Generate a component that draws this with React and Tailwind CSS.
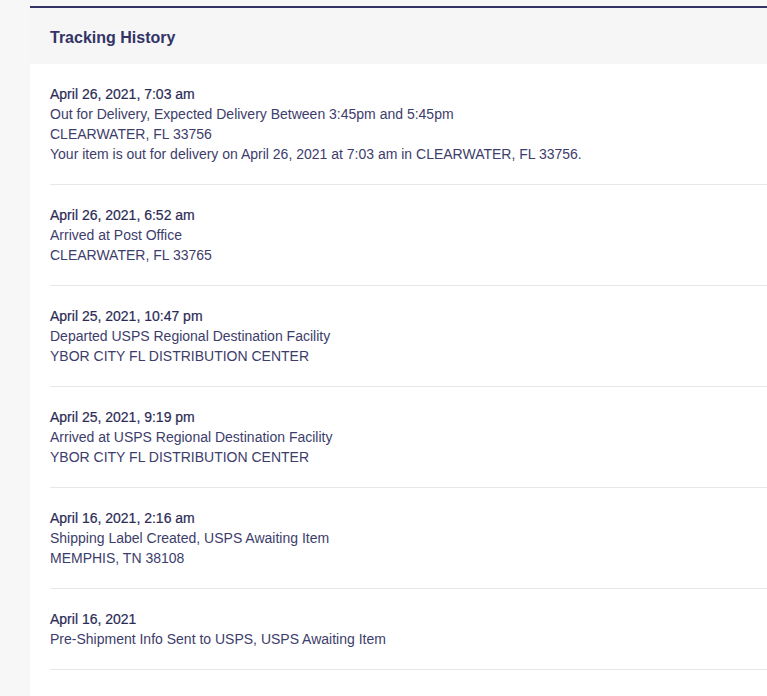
import React from 'react';

const events = [
  {
    date: 'April 26, 2021, 7:03 am',
    lines: [
      'Out for Delivery, Expected Delivery Between 3:45pm and 5:45pm',
      'CLEARWATER, FL 33756',
      'Your item is out for delivery on April 26, 2021 at 7:03 am in CLEARWATER, FL 33756.',
    ],
  },
  {
    date: 'April 26, 2021, 6:52 am',
    lines: ['Arrived at Post Office', 'CLEARWATER, FL 33765'],
  },
  {
    date: 'April 25, 2021, 10:47 pm',
    lines: ['Departed USPS Regional Destination Facility', 'YBOR CITY FL DISTRIBUTION CENTER'],
  },
  {
    date: 'April 25, 2021, 9:19 pm',
    lines: ['Arrived at USPS Regional Destination Facility', 'YBOR CITY FL DISTRIBUTION CENTER'],
  },
  {
    date: 'April 16, 2021, 2:16 am',
    lines: ['Shipping Label Created, USPS Awaiting Item', 'MEMPHIS, TN 38108'],
  },
  {
    date: 'April 16, 2021',
    lines: ['Pre-Shipment Info Sent to USPS, USPS Awaiting Item'],
  },
];

const TrackingEvent = ({ date, lines }) => (
  <div className="py-5 border-b border-[#e7e7e7] text-[14px] leading-5">
    <p className="text-[#2b2b55] [-webkit-text-stroke:0.2px_#2b2b55]">{date}</p>
    {lines.map((l) => (
      <p key={l} className="text-[#3d3d6b]">{l}</p>
    ))}
  </div>
);

export default function App() {
  return (
    <div className="min-h-[696px] bg-[#f7f7f7] pt-[6px] pl-[30px] font-['Liberation_Sans',Arial,sans-serif]">
      <div className="border-t-2 border-[#333366] min-h-[690px] flex flex-col">
        {/* header */}
        <div className="bg-[#f6f6f6] pl-5 pt-5 pb-4">
          <h2 className="text-[16px] leading-5 font-bold text-[#333366]">Tracking History</h2>
        </div>

        {/* events */}
        <div className="bg-white flex-1 pl-5">
          {events.map((e) => (
            <TrackingEvent key={e.date} {...e} />
          ))}
        </div>
      </div>
    </div>
  );
}
